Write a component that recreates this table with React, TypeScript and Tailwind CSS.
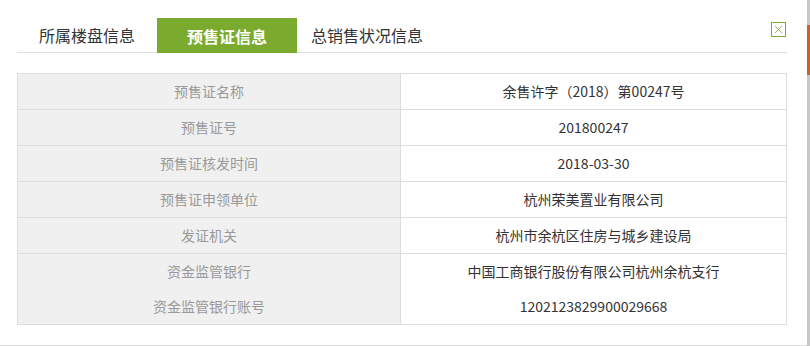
import { X } from "lucide-react";

const rows = [
  { label: "预售证名称", value: "余售许字（2018）第00247号" },
  { label: "预售证号", value: "201800247" },
  { label: "预售证核发时间", value: "2018-03-30" },
  { label: "预售证申领单位", value: "杭州荣美置业有限公司" },
  { label: "发证机关", value: "杭州市余杭区住房与城乡建设局" },
  { label: "资金监管银行", value: "中国工商银行股份有限公司杭州余杭支行", noLine: true },
  { label: "资金监管银行账号", value: "1202123829900029668" },
];

const tabs = ["所属楼盘信息", "预售证信息", "总销售状况信息"];

export default function App() {
  return (
    <div
      className="flex h-[346px] w-[810px] bg-white"
      style={{ fontFamily: '"Noto Sans CJK SC", "Liberation Sans", sans-serif' }}
    >
      <div className="flex h-full w-[807px] flex-col border-b border-[#dddddd]">
        {/* tab bar */}
        <div className="flex pl-[17px] pr-[20px] pt-[18px]">
          <div className="flex flex-1 border-b border-[#dddddd]">
            {tabs.map((tab, i) => (
              <div
                key={tab}
                className={
                  i === 1
                    ? "-mb-px flex h-[35px] w-[140px] items-center justify-center bg-[#7aab2e] text-[16px] font-bold text-white"
                    : "flex h-[34px] w-[140px] items-center justify-center text-[16px] text-[#333333]"
                }
              >
                {tab}
              </div>
            ))}
            <button className="ml-auto mr-px mt-[4px] flex h-[15px] w-[15px] items-center justify-center self-start border border-[#7aab2e] text-[#7aab2e]">
              <X className="h-[13px] w-[13px]" strokeWidth={1.5} />
            </button>
          </div>
        </div>

        {/* info table */}
        <div className="ml-[17px] mt-[20px] w-[770px] border border-[#dddddd] text-[14px]">
          {rows.map((row, i) => (
            <div
              key={row.label}
              className={
                i === rows.length - 1 || row.noLine
                  ? "flex h-[35px]"
                  : "flex h-[36px] border-b border-[#dddddd]"
              }
            >
              <div className="flex w-[383px] items-center justify-center border-r border-[#dddddd] bg-[#f0f0f0] text-[#999999]">
                {row.label}
              </div>
              <div className="flex flex-1 items-center justify-center text-[#333333]">
                {row.value}
              </div>
            </div>
          ))}
        </div>
      </div>

      {/* edge of the page behind */}
      <div className="flex h-full w-[3px] flex-col bg-[#c8c8c8]">
        <div className="h-[25px]" />
        <div className="h-[50px] bg-[#c8642a]" />
      </div>
    </div>
  );
}
